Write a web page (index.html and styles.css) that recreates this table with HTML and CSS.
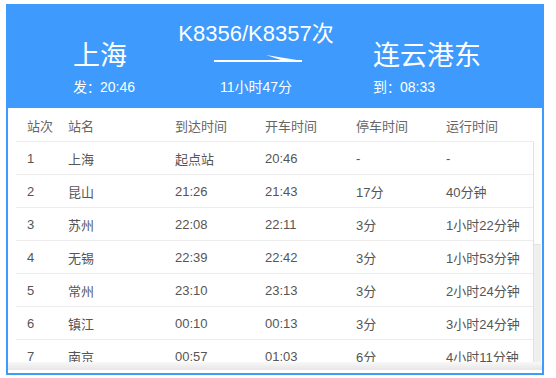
FILE: index.html
```html
<!DOCTYPE html>
<html lang="zh-CN">
<head>
<meta charset="utf-8">
<title>K8356/K8357次</title>
<link rel="stylesheet" href="styles.css">
</head>
<body>
<div class="card">
  <div class="hdr">
    <div class="side side-from">
      <div class="city">上海</div>
      <div class="sub">发<span class="colon">：</span>20:46</div>
    </div>
    <div class="mid">
      <div class="train">K8356/K8357次</div>
      <svg class="arrow" width="90" height="10" viewBox="0 0 90 10">
        <rect x="0" y="6" width="88" height="2" fill="#fff"/>
        <polygon points="52,1 89,7 70,7" fill="#fff"/>
      </svg>
      <div class="sub">11小时47分</div>
    </div>
    <div class="side side-to">
      <div class="city">连云港东</div>
      <div class="sub">到<span class="colon">：</span>08:33</div>
    </div>
  </div>
  <div class="tbl">
    <div class="row head">
      <span>站次</span><span>站名</span><span>到达时间</span><span>开车时间</span><span>停车时间</span><span>运行时间</span>
    </div>
    <div class="scroll">
      <div class="rows">
        <div class="row"><span>1</span><span>上海</span><span>起点站</span><span>20:46</span><span>-</span><span>-</span></div>
        <div class="row"><span>2</span><span>昆山</span><span>21:26</span><span>21:43</span><span>17分</span><span>40分钟</span></div>
        <div class="row"><span>3</span><span>苏州</span><span>22:08</span><span>22:11</span><span>3分</span><span>1小时22分钟</span></div>
        <div class="row"><span>4</span><span>无锡</span><span>22:39</span><span>22:42</span><span>3分</span><span>1小时53分钟</span></div>
        <div class="row"><span>5</span><span>常州</span><span>23:10</span><span>23:13</span><span>3分</span><span>2小时24分钟</span></div>
        <div class="row"><span>6</span><span>镇江</span><span>00:10</span><span>00:13</span><span>3分</span><span>3小时24分钟</span></div>
        <div class="row"><span>7</span><span>南京</span><span>00:57</span><span>01:03</span><span>6分</span><span>4小时11分钟</span></div>
      </div>
      <div class="vbar"><div class="thumb"></div></div>
    </div>
    <div class="hbar"></div>
  </div>
</div>
</body>
</html>
```

FILE: styles.css
```css
* { box-sizing: border-box; }
html, body { margin: 0; padding: 0; background: #fff; }
body {
  font-family: "Liberation Sans", "Noto Sans CJK SC", sans-serif;
  padding: 4px 0 0 6px;
}
.card {
  width: 538px;
  height: 371px;
  background: #3e9afc;
  padding: 0 2px 2px 2px;
  display: flex;
  flex-direction: column;
}
.hdr {
  height: 104px;
  display: flex;
  color: #fff;
  padding-left: 65px;
}
.side { padding-top: 37px; }
.side-from { width: 108px; }
.side-to { margin-left: 42px; }
.city {
  font-size: 27px;
  line-height: 30px;
  white-space: nowrap;
}
.sub {
  font-size: 14px;
  line-height: 16px;
  margin-top: 8px;
  white-space: nowrap;
}
.colon {
  font-family: "Noto Sans CJK JP", sans-serif;
  font-size: 13px;
}
.mid {
  width: 150px;
  padding-top: 17px;
  display: flex;
  flex-direction: column;
  align-items: center;
}
.train {
  font-size: 22px;
  line-height: 26px;
  white-space: nowrap;
}
.arrow { display: block; margin-top: 7px; margin-left: 6px; }
.mid .sub { margin-top: 15px; }
.tbl {
  flex: 1;
  background: #fff;
  display: flex;
  flex-direction: column;
}
.row {
  display: grid;
  grid-template-columns: 41px 107px 90px 91px 90px 1fr;
  align-items: center;
  height: 33px;
  padding-left: 11px;
  border-bottom: 1px solid #ececec;
  font-size: 13px;
  color: #555;
}
.row.head {
  margin: 0 8px;
  height: 34px;
  color: #666;
  padding-top: 1px;
}
.scroll {
  height: 220px;
  display: flex;
  overflow: hidden;
}
.rows {
  margin-left: 8px;
  width: 517px;
}
.vbar {
  width: 8px;
  background: #efefef;
  border-left: 1px solid #e0e0e0;
}
.thumb {
  height: 103px;
  background: #fdfdfd;
  border-bottom: 1px solid #e4e4e4;
}
.hbar {
  height: 8px;
  background: linear-gradient(#f8f8f8, #e6e6e6);
}
```
